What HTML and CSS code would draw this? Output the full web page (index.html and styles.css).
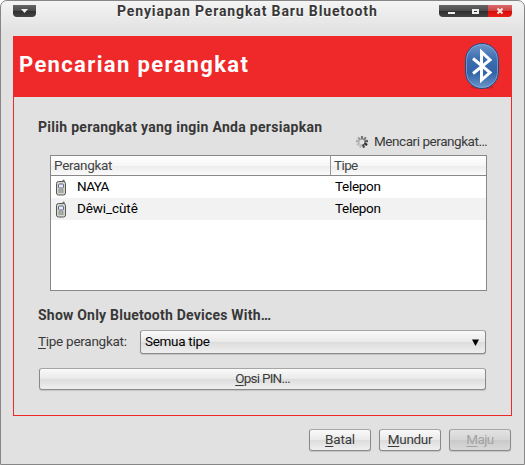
FILE: index.html
```html
<!DOCTYPE html>
<html lang="id">
<head>
<meta charset="utf-8">
<title>Penyiapan Perangkat Baru Bluetooth</title>
<link rel="stylesheet" href="styles.css">
</head>
<body>
<div class="window">
  <header class="titlebar">
    <div class="wm-menu"><svg width="23" height="12" viewBox="0 0 23 12"><path d="M8 4h7l-3.500 4z" fill="#eee"/></svg></div>
    <h1 class="title">Penyiapan Perangkat Baru Bluetooth</h1>
    <div class="wm-buttons">
      <svg width="73" height="12" viewBox="0 0 73 12">
        <path d="M9 7h7v2H9z" fill="#eee"/>
        <path d="M33 4h7v5h-7zM35 6v1h3V6z" fill="#eee" fill-rule="evenodd"/>
        <path d="M58.500 3.500l5 5M63.500 3.500l-5 5" stroke="#f4e4e4" stroke-width="2"/>
      </svg>
    </div>
  </header>
  <main class="assistant">
    <div class="banner">
      <h2>Pencarian perangkat</h2>
      <svg class="bt" width="34" height="47" viewBox="1 1 34 47">
        <defs>
          <linearGradient id="btfill" x1="0" y1="0" x2="0" y2="1"><stop offset="0" stop-color="#7095c9"/><stop offset=".35" stop-color="#3c6db0"/><stop offset=".65" stop-color="#3163a6"/><stop offset="1" stop-color="#6b97cb"/></linearGradient>
        </defs>
        <ellipse cx="18" cy="45" rx="12" ry="2" fill="#a51c20" opacity=".4"/>
        <rect x="1.500" y="1.500" width="33" height="45" rx="16.500" ry="16" fill="url(#btfill)" stroke="#254a82"/>
        <rect x="2.500" y="2.500" width="31" height="43" rx="15.500" ry="15" fill="none" stroke="#86a9d8" opacity=".7"/>
        <path d="M9 16.500L26 30.500L17.500 38V10L26 18L9 31.500" fill="none" stroke="#fff" stroke-width="3"/>
      </svg>
    </div>
    <div class="content">
      <h3 class="pick">Pilih perangkat yang ingin Anda persiapkan</h3>
      <div class="search">
        <svg width="14" height="14" viewBox="-7 -7 14 14" stroke-width="2.200">
          <path d="M0-2.500V-6" stroke="#777"/><path d="M0-2.500V-6" stroke="#999" transform="rotate(-40)"/><path d="M0-2.500V-6" stroke="#aaa" transform="rotate(-80)"/><path d="M0-2.500V-6" stroke="#bbb" transform="rotate(-120)"/><path d="M0-2.500V-6" stroke="#bbb" transform="rotate(-160)"/><path d="M0-2.500V-6" stroke="#444" transform="rotate(160)"/><path d="M0-2.500V-6" stroke="#333" transform="rotate(120)"/><path d="M0-2.500V-6" stroke="#555" transform="rotate(80)"/><path d="M0-2.500V-6" stroke="#777" transform="rotate(40)"/>
        </svg>
        <span class="t-search">Mencari perangkat…</span>
      </div>
      <div class="list">
        <div class="row head"><div class="c1"><span class="t-head">Perangkat</span></div><div class="c2"><span class="t-tipe">Tipe</span></div></div>
        <div class="row"><div class="c1"><svg class="phone" width="12" height="17" viewBox="0 0 12 17"><path d="M7 2.500L9 .8V3" fill="none" stroke="#555753"/><rect x="1.500" y="2.500" width="9" height="13.500" rx="2" fill="#d3d7cf" stroke="#555753"/><rect x="3.500" y="5" width="5" height="4" rx="1" fill="#e4edf8" stroke="#668"/><path d="M3.500 11h5M3.500 13h5" stroke="#555" stroke-dasharray="1.300 .5"/></svg><span class="t-naya">NAYA</span></div><div class="c2"><span class="t-tel">Telepon</span></div></div>
        <div class="row alt"><div class="c1"><svg class="phone" width="12" height="17" viewBox="0 0 12 17"><path d="M7 2.500L9 .8V3" fill="none" stroke="#555753"/><rect x="1.500" y="2.500" width="9" height="13.500" rx="2" fill="#d3d7cf" stroke="#555753"/><rect x="3.500" y="5" width="5" height="4" rx="1" fill="#e4edf8" stroke="#668"/><path d="M3.500 11h5M3.500 13h5" stroke="#555" stroke-dasharray="1.300 .5"/></svg><span class="t-dewi">Dêwi_cùtê</span></div><div class="c2"><span class="t-tel">Telepon</span></div></div>
      </div>
      <h3 class="show">Show Only Bluetooth Devices With…</h3>
      <div class="filter">
        <label class="t-label"><u>T</u>ipe perangkat:</label>
        <div class="combo"><span class="t-semua">Semua tipe</span><svg width="7" height="7" viewBox="0 0 7 7"><path d="M0 .5h7L3.500 7z"/></svg></div>
      </div>
      <div class="button pin"><span><u>O</u>psi PIN…</span></div>
    </div>
  </main>
  <footer class="actions">
    <div class="button"><span class="t-batal"><u>B</u>atal</span></div>
    <div class="button"><span class="t-mundur"><u>M</u>undur</span></div>
    <div class="button disabled"><span class="t-maju"><u>M</u>aju</span></div>
  </footer>
</div>
</body>
</html>
```
FILE: styles.css
```css
* { box-sizing: border-box; }
body { margin: 0; background: #fff; font: 13.5px/18px Roboto, "Liberation Sans", sans-serif; color: #3a3a3a; letter-spacing: -.3px; }
h1, h2, h3 { margin: 0; font-size: 14px; font-weight: 700; white-space: nowrap; color: #383838; }
span { white-space: nowrap; }
u { text-decoration-thickness: 1px; text-underline-offset: 2px; }
svg { display: block; flex: none; }
.window { width: 525px; height: 465px; border: 1px solid #868686; border-radius: 7px 7px 0 0; background: linear-gradient(#f4f4f4, #e1e1e1 32px); display: flex; flex-direction: column; padding: 0 12px; }
.titlebar { height: 35px; flex: none; display: flex; align-items: flex-start; justify-content: space-between; padding-top: 4px; }
.wm-menu { width: 23px; height: 12px; border-radius: 0 0 4px 4px; background: linear-gradient(#666, #4a4a4a 50%, #2e2e2e 50%, #444); }
.title { margin: -3px 0 0 52px; letter-spacing: .87px; width: 293px; text-shadow: 0 1px #fff; }
.wm-buttons { width: 73px; height: 12px; border-radius: 0 0 4px 4px; background: linear-gradient(#d96a6a, #d04040 50%, #d80a08 50%, #e82018) 49px 0 / 24px 12px no-repeat, linear-gradient(#666, #4a4a4a 50%, #2e2e2e 50%, #444); }
.assistant { height: 380px; flex: none; border: 1px solid #ef2929; }
.banner { height: 60px; background: #ef2929; display: flex; justify-content: space-between; padding: 6px 12px 0 5px; }
.banner h2 { color: #fff; font-size: 22px; line-height: 44px; letter-spacing: 1.35px; }
.content { padding: 21px 24px 0; }
.pick { height: 18px; letter-spacing: .29px; }
.search { display: flex; justify-content: flex-end; height: 19px; gap: 5px; margin-top: -3px; line-height: 17px; }
.search svg { margin-top: 2px; }
.t-search { letter-spacing: -.45px; }
.list { height: 136px; margin: 3px 0 0 12px; border: 1px solid #888; background: #fff; color: #000; }
.row { display: flex; height: 22px; line-height: 21px; }
.c1 { width: 279px; display: flex; }
.c2 { padding-left: 5px; }
.head { height: 20px; line-height: 19px; background: linear-gradient(#fff, #f6f6f6 50%, #ececec 50%, #fafafa); border-bottom: 1px solid #888; color: #444; }
.head .c1 { padding-left: 3px; }
.head .c2 { border-left: 1px solid #999; padding-left: 3px; }
.alt { background: #f2f2f2; }
.phone { margin: 3px 10px 0 4px; }
.t-head, .t-tel { letter-spacing: -.3px; }
.t-tipe, .t-naya { letter-spacing: -.6px; }
.t-dewi { letter-spacing: -.1px; }
.show { margin-top: 15px; letter-spacing: .22px; }
.filter { display: flex; justify-content: space-between; height: 24px; line-height: 23px; margin: 6px 1px 0 0; }
.t-label { letter-spacing: -.27px; }
.combo, .button { border: 1px solid #8a8a8a; border-top-color: #a6a6a6; border-radius: 3px; background: linear-gradient(#fafafa, #e9e9e9 50%, #dcdcdc 50%, #efefef); box-shadow: 0 1px 1px #0002; }
.combo { width: 346px; display: flex; justify-content: space-between; color: #000; padding: 0 6px 0 4px; line-height: 21px; }
.combo svg { margin-top: 8px; }
.button { display: flex; justify-content: center; height: 22px; line-height: 19px; }
.pin { margin: 14px 1px 0; letter-spacing: -.75px; }
.actions { display: flex; justify-content: flex-end; gap: 8px; padding: 13px 1px 0 0; }
.actions .button { width: 62px; }
.actions .disabled { color: #a3a3a3; background: linear-gradient(#e2e2e2, #d5d5d5 50%, #cacaca 50%, #d8d8d8); }
.t-batal { letter-spacing: -.2px; }
.t-maju { letter-spacing: -.6px; }
```
